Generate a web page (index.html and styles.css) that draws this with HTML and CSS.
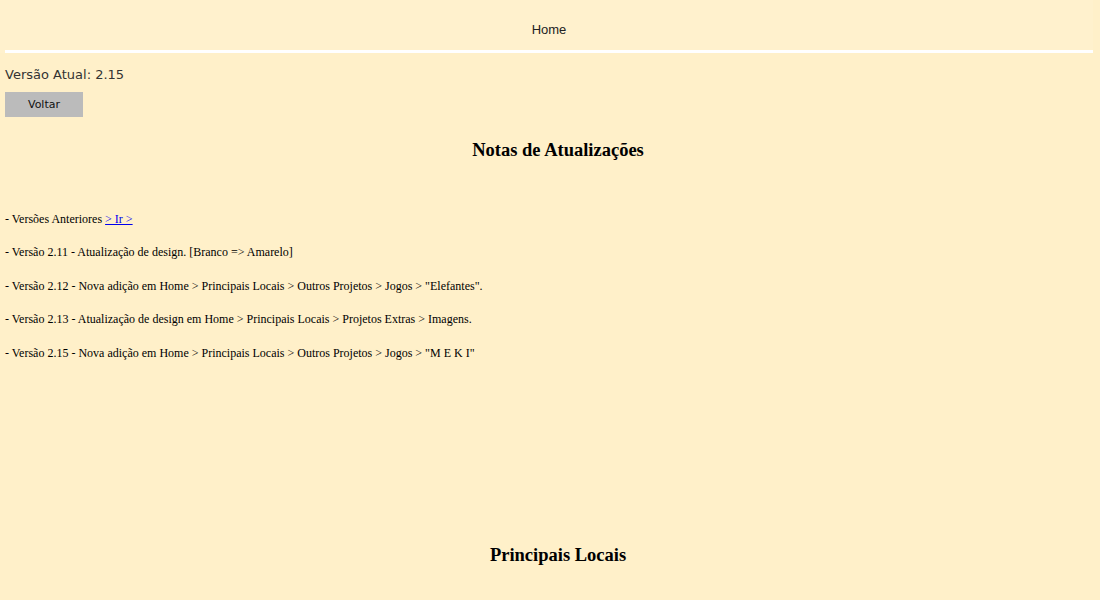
FILE: index.html
```html
<!DOCTYPE html>
<html lang="pt">
<head>
<meta charset="utf-8">
<title>Notas de Atualizações</title>
<link rel="stylesheet" href="styles.css">
</head>
<body>
<header class="topbar">
  <nav class="nav"><a class="nav-link" href="#">Home</a></nav>
</header>
<main class="content">
  <p class="version">Versão Atual: 2.15</p>
  <button class="back" type="button">Voltar</button>
  <h3 class="title">Notas de Atualizações</h3>
  <ul class="notes">
    <li>- Versões Anteriores <a href="#">&gt; Ir &gt;</a></li>
    <li>- Versão 2.11 - Atualização de design. [Branco =&gt; Amarelo]</li>
    <li>- Versão 2.12 - Nova adição em Home &gt; Principais Locais &gt; Outros Projetos &gt; Jogos &gt; "Elefantes".</li>
    <li>- Versão 2.13 - Atualização de design em Home &gt; Principais Locais &gt; Projetos Extras &gt; Imagens.</li>
    <li>- Versão 2.15 - Nova adição em Home &gt; Principais Locais &gt; Outros Projetos &gt; Jogos &gt; "M E K I"</li>
  </ul>
  <h3 class="title title-low">Principais Locais</h3>
</main>
</body>
</html>
```
FILE: styles.css
```css
html, body {
  margin: 0;
  padding: 0;
}
body {
  background: #fff0c9;
  font-family: "Liberation Serif", "Times New Roman", serif;
  color: #000;
  overflow: hidden;
}
.topbar {
  background: #fff1cd;
  margin-right: 7px;
}
.nav {
  height: 41px;
  margin-left: 5px;
  border-bottom: 3px solid #ffffff;
  display: flex;
  align-items: center;
  justify-content: center;
  padding-top: 9px;
}
.nav-link {
  font-family: "Liberation Sans", Arial, sans-serif;
  font-size: 13px;
  color: #222;
  text-decoration: none;
}
.content {
  padding: 0 5px;
}
.version {
  margin: 14px 0 0;
  font-family: "DejaVu Sans", Verdana, sans-serif;
  font-size: 13px;
  color: #333;
  line-height: 16px;
}
.back {
  display: block;
  margin-top: 9px;
  width: 78px;
  height: 25px;
  border: none;
  background: #bbbbbb;
  font-family: "DejaVu Sans", Tahoma, sans-serif;
  font-size: 11px;
  color: #111;
  padding: 0;
}
.title {
  margin: 22px 0 0;
  text-align: center;
  font-size: 18.5px;
  font-weight: bold;
  padding-left: 16px;
  line-height: 22px;
}
.notes {
  list-style: none;
  margin: 50px 0 0;
  padding: 0;
  font-size: 12px;
  line-height: 16px;
  display: flex;
  flex-direction: column;
  gap: 17.4px;
}
.notes a {
  color: #0000ee;
}
.title-low {
  margin-top: 183px;
}
```
